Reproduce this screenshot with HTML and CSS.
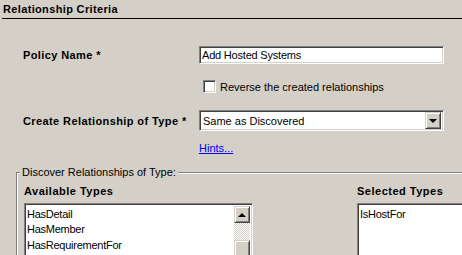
FILE: index.html
```html
<!DOCTYPE html>
<html lang="en">
<head>
    <meta charset="UTF-8">
    <title>Relationship Criteria</title>
    <link rel="stylesheet" href="styles.css">
</head>
<body>

    <div class="title">Relationship Criteria</div>

    <div class="form">
        <div class="row row-name">
            <label class="label">Policy Name *</label>
            <div class="textbox">Add Hosted Systems</div>
        </div>

        <div class="row row-check">
            <span class="checkbox"></span>
            <span>Reverse the created relationships</span>
        </div>

        <div class="row row-type">
            <label class="label">Create Relationship of Type *</label>
            <div class="combo">
                <span class="combo-text">Same as Discovered</span>
                <span class="combo-btn"><span class="arrow-down"></span></span>
            </div>
        </div>

        <div class="row row-hints">
            <a class="hints" href="#">Hints...</a>
        </div>
    </div>

    <div class="group">
        <div class="group-legend">Discover Relationships of Type:</div>
        <div class="types">
            <div class="type-col">
                <div class="col-title">Available Types</div>
                <div class="listbox available">
                    <div class="items">
                        <div>HasDetail</div>
                        <div>HasMember</div>
                        <div>HasRequirementFor</div>
                    </div>
                    <div class="scrollbar">
                        <span class="scroll-btn"><span class="arrow-up"></span></span>
                        <span class="scroll-track"></span>
                        <span class="scroll-thumb"></span>
                    </div>
                </div>
            </div>
            <div class="type-col">
                <div class="col-title">Selected Types</div>
                <div class="listbox selected">
                    <div class="items">
                        <div>IsHostFor</div>
                    </div>
                </div>
            </div>
        </div>
    </div>

</body>
</html>
```

FILE: styles.css
```css
html, body {
    overflow: hidden;
}

body {
    margin: 0;
    background: #d4d0c8;
    font-family: "Liberation Sans", Arial, sans-serif;
    font-size: 11px;
    color: #000;
    width: 462px;
    height: 255px;
}

.title {
    margin-left: 2px;
    padding: 3px 0 0 1px;
    height: 19px;
    box-sizing: border-box;
    font-weight: bold;
    letter-spacing: 0.35px;
    border-bottom: 1px solid #000;
}

.form {
    padding-left: 23px;
    margin-top: 27px;
}

.row {
    display: flex;
    align-items: center;
}

.label {
    width: 176px;
    font-weight: bold;
    letter-spacing: 0.4px;
}

/* sunken field */
.textbox,
.combo,
.listbox,
.checkbox {
    box-sizing: border-box;
    background: #fff;
    border: 1px solid;
    border-color: #808080 #fff #fff #808080;
    box-shadow: inset 1px 1px #404040, inset -1px -1px #d4d0c8;
}

.textbox {
    width: 245px;
    height: 18px;
    padding: 0 2px;
    line-height: 16px;
    letter-spacing: -0.2px;
}

.row-check {
    margin-top: 16px;
    padding-left: 180px;
    gap: 4px;
}

.checkbox {
    width: 13px;
    height: 13px;
}

.row-type {
    margin-top: 17px;
}

.combo {
    width: 245px;
    height: 21px;
    display: flex;
    align-items: center;
    padding: 2px;
}

.combo-text {
    flex: 1;
    padding-left: 1px;
}

.combo-btn,
.scroll-btn,
.scroll-thumb {
    box-sizing: border-box;
    background: #d4d0c8;
    border: 1px solid;
    border-color: #d4d0c8 #404040 #404040 #d4d0c8;
    box-shadow: inset 1px 1px #fff, inset -1px -1px #808080;
}

.combo-btn,
.scroll-btn {
    display: flex;
    align-items: center;
    justify-content: center;
}

.combo-btn {
    width: 16px;
    height: 17px;
}

.arrow-down {
    border-left: 4px solid transparent;
    border-right: 4px solid transparent;
    border-top: 4px solid #000;
}

.arrow-up {
    border-left: 4px solid transparent;
    border-right: 4px solid transparent;
    border-bottom: 4px solid #000;
}

.row-hints {
    margin-top: 11px;
    padding-left: 176px;
}

.hints {
    color: #0000ff;
    text-decoration: underline;
}

/* group box */
.group {
    margin: 18px 0 0 16px;
    border-top: 1px solid #808080;
    border-left: 1px solid #808080;
    box-shadow: inset 1px 1px #fff;
    position: relative;
}

.group-legend {
    position: absolute;
    top: -7px;
    left: 3px;
    padding: 0 2px;
    background: #d4d0c8;
}

.types {
    display: grid;
    grid-template-columns: 229px 120px;
    column-gap: 104px;
    padding: 12px 0 0 7px;
    height: 80px;
    overflow: hidden;
}

.col-title {
    font-weight: bold;
    letter-spacing: 0.5px;
    height: 18px;
}

.listbox {
    height: 80px;
    display: flex;
    padding: 2px;
}

.items {
    flex: 1;
    padding-top: 1px;
    line-height: 15.4px;
    letter-spacing: -0.25px;
}

.scrollbar {
    width: 16px;
    display: flex;
    flex-direction: column;
}

.scroll-btn {
    height: 17px;
}

.scroll-track {
    height: 17px;
    background-color: #fff;
    background-image:
        linear-gradient(45deg, #d4d0c8 25%, transparent 25%, transparent 75%, #d4d0c8 75%),
        linear-gradient(45deg, #d4d0c8 25%, transparent 25%, transparent 75%, #d4d0c8 75%);
    background-size: 2px 2px;
    background-position: 0 0, 1px 1px;
}

.scroll-thumb {
    height: 30px;
}
```
